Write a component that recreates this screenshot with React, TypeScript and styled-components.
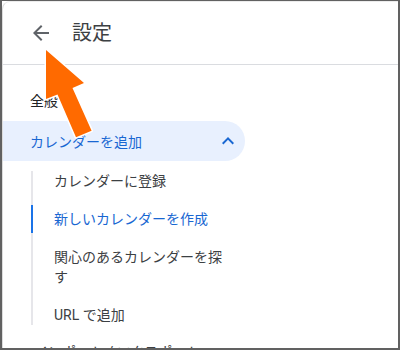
import React from 'react'
import styled, { createGlobalStyle } from 'styled-components'

const GlobalStyle = createGlobalStyle`
  html, body {
    margin: 0;
    padding: 0;
    background: #ffffff;
  }
  body {
    font-family: Roboto, "Noto Sans CJK JP", sans-serif;
  }
`;

const subItems = [
  { label: 'カレンダーに登録', active: false },
  { label: '新しいカレンダーを作成', active: true },
  { label: '関心のあるカレンダーを探す', active: false },
  { label: 'URL で追加', active: false },
];

const BackIcon = () => (
  <svg width="24" height="24" viewBox="0 0 24 24">
    <path fill="#5f6368" d="M20 11H7.83l5.59-5.59L12 4l-8 8 8 8 1.41-1.41L7.83 13H20v-2z" />
  </svg>
);

const ChevronUp = () => (
  <svg width="24" height="24" viewBox="0 0 24 24">
    <path fill="#1967d2" d="M12 8l-6 6 1.41 1.41L12 10.83l4.59 4.58L18 14z" />
  </svg>
);

const PointerArrow = () => (
  <ArrowSvg width="400" height="350" viewBox="0 0 400 350">
    <polygon
      points="46,50 84,83 72.5,88 91.6,130.7 76,137.3 57.5,94.5 46,99"
      fill="#ff6a00"
      stroke="#ffffff"
      strokeWidth="3"
      strokeLinejoin="round"
      style={{ paintOrder: 'stroke' }}
    />
  </ArrowSvg>
);

const App = () => {
  return (
    <>
      <GlobalStyle />
      <Frame>
        <Panel>
          <Header>
            <IconButton>
              <BackIcon />
            </IconButton>
            <Title>設定</Title>
          </Header>
          <Sidebar>
            <SectionLabel>全般</SectionLabel>
            <ExpandRow>
              <span>カレンダーを追加</span>
              <ChevronUp />
            </ExpandRow>
            <SubList>
              {subItems.map((item) => (
                <SubItem key={item.label} $active={item.active}>
                  {item.label}
                </SubItem>
              ))}
            </SubList>
            <CollapsedRow>インポート / エクスポート</CollapsedRow>
          </Sidebar>
        </Panel>
        <PointerArrow />
      </Frame>
    </>
  )
}

const Frame = styled.div`
  position: relative;
  width: 400px;
  height: 350px;
  box-sizing: border-box;
  border: 2px solid #616161;
  border-top-width: 1px;
  overflow: hidden;
  background: #ffffff;
`;

const Panel = styled.div`
  height: 100%;
  box-sizing: border-box;
  border-left: 1px solid #dcdcdc;
  border-top: 1px solid #ececec;
  border-top-left-radius: 8px;
`;

const Header = styled.header`
  display: flex;
  align-items: center;
  height: 62px;
  padding-left: 26px;
  border-bottom: 1px solid #dadce0;
`;

const IconButton = styled.div`
  display: flex;
  width: 24px;
  height: 24px;
`;

const Title = styled.h1`
  margin: 0 0 0 19px;
  font-size: 20px;
  font-weight: 400;
  line-height: 28px;
  color: #3c4043;
`;

const Sidebar = styled.nav`
  display: flex;
  flex-direction: column;
  width: 242px;
`;

const SectionLabel = styled.div`
  margin: 26px 0 0 27px;
  font-size: 14px;
  line-height: 20px;
  color: #202124;
`;

const ExpandRow = styled.div`
  display: flex;
  align-items: center;
  justify-content: space-between;
  height: 40px;
  margin-top: 10px;
  padding: 0 5px 0 27px;
  background: #e8f0fe;
  border-radius: 0 20px 20px 0;
  font-size: 14px;
  color: #1967d2;
`;

const SubList = styled.ul`
  display: flex;
  flex-direction: column;
  gap: 18px;
  list-style: none;
  margin: 10px 0 0 28px;
  padding: 0;
  border-left: 2px solid #e6e6ea;
`;

const SubItem = styled.li<{ $active: boolean }>`
  position: relative;
  padding: 0 12px 0 21px;
  font-size: 14px;
  line-height: 20px;
  color: ${(p) => (p.$active ? '#1967d2' : '#3c4043')};

  &::before {
    content: '';
    display: ${(p) => (p.$active ? 'block' : 'none')};
    position: absolute;
    left: -2px;
    top: -4px;
    bottom: -4px;
    width: 2px;
    background: #1a73e8;
  }
`;

const CollapsedRow = styled.div`
  margin: 17px 0 0 31px;
  font-size: 14px;
  line-height: 20px;
  color: #3c4043;
`;

const ArrowSvg = styled.svg`
  position: absolute;
  left: -2px;
  top: -1px;
  pointer-events: none;
`;

export default App
